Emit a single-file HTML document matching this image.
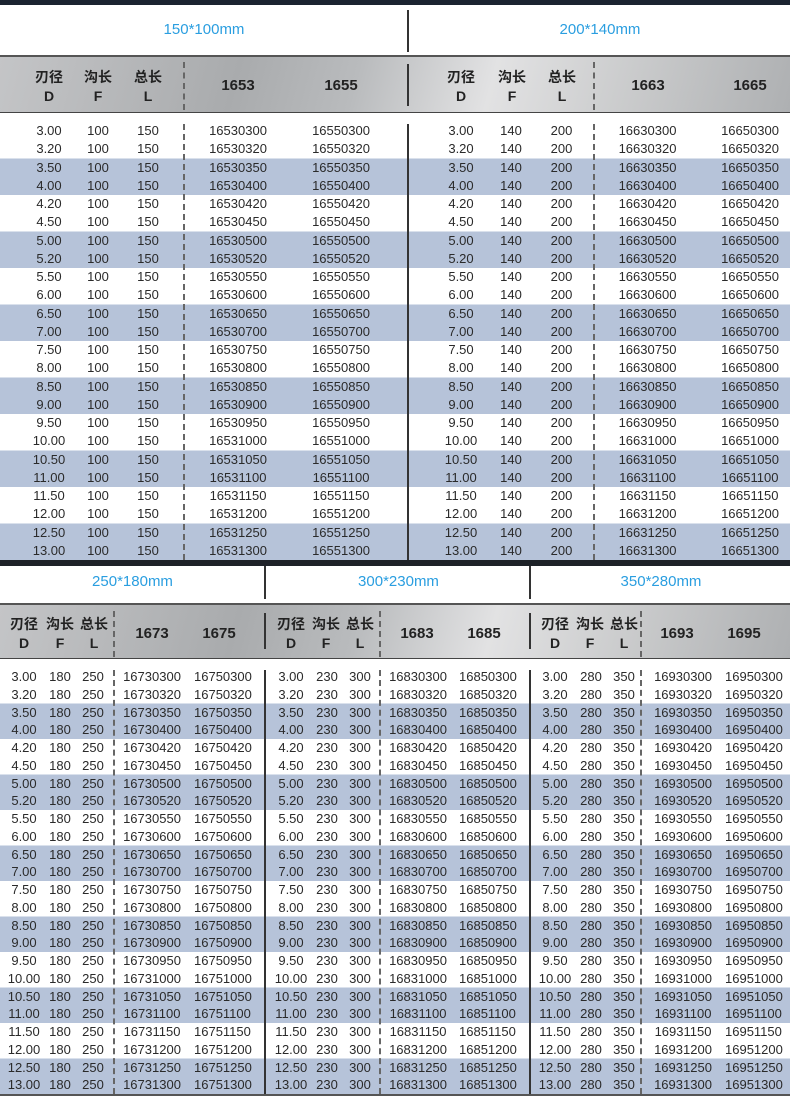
<!DOCTYPE html>
<html><head><meta charset="utf-8"><style>
*{margin:0;padding:0;box-sizing:border-box}
body{width:790px;height:1100px;position:relative;background:#fff;font-family:"Liberation Sans","Noto Sans CJK SC",sans-serif;color:#2a2a2a;overflow:hidden}
.a{position:absolute}
.title{color:#2a9ee0;font-size:15px;text-align:center}
.hdr{background:linear-gradient(105deg,#c4c5c7 0%,#a9abad 30%,#b9bbbd 45%,#e2e2e3 62%,#c9cacb 80%,#aeb0b2 100%)}
.band{background:repeating-linear-gradient(#fff 0,#fff 36.5px,#b6c3d9 36.5px,#b6c3d9 73px)}
.band2{background:repeating-linear-gradient(#fff 0,#fff 35.5px,#b6c3d9 35.5px,#b6c3d9 71px)}
table{position:absolute;border-collapse:collapse;table-layout:fixed;font-size:13px;color:#2a2a2a}
td{padding:0;text-align:center;white-space:nowrap;overflow:visible}
.t td{height:18.25px;line-height:18.25px}
.b td{height:17.75px;line-height:17.75px}
.vl{position:absolute;width:2px;background:#333}
.dash{position:absolute;width:0;border-left:2px dashed #666}
.hc{position:absolute;font-weight:bold;font-size:14px;color:#222;text-align:center;line-height:19px}
.code{position:absolute;font-weight:bold;font-size:15px;color:#222;text-align:center}
</style></head><body>
<div class="a" style="left:0;top:0;width:790px;height:5px;background:#1b2330"></div>
<div class="a title" style="left:0;top:21px;width:408px">150*100mm</div>
<div class="a title" style="left:410px;top:21px;width:380px">200*140mm</div>
<div class="vl" style="left:407px;top:10px;height:42px"></div>
<div class="a" style="left:0;top:55px;width:790px;height:2px;background:#555"></div>
<div class="a hdr" style="left:0;top:57px;width:790px;height:55px"></div>
<div class="a" style="left:0;top:112px;width:790px;height:1px;background:#444"></div>
<div class="vl" style="left:407px;top:64px;height:42px"></div>
<div class="dash" style="left:183px;top:62px;height:48px"></div>
<div class="dash" style="left:593px;top:62px;height:48px"></div>
<div class="hc" style="left:24px;top:68px;width:50px">刃径<br>D</div>
<div class="hc" style="left:74px;top:68px;width:48px">沟长<br>F</div>
<div class="hc" style="left:122px;top:68px;width:52px">总长<br>L</div>
<div class="code" style="left:198px;top:77px;width:80px">1653</div>
<div class="code" style="left:301px;top:77px;width:80px">1655</div>
<div class="hc" style="left:436px;top:68px;width:50px">刃径<br>D</div>
<div class="hc" style="left:487px;top:68px;width:50px">沟长<br>F</div>
<div class="hc" style="left:537px;top:68px;width:50px">总长<br>L</div>
<div class="code" style="left:608px;top:77px;width:80px">1663</div>
<div class="code" style="left:710px;top:77px;width:80px">1665</div>
<div class="a band" style="left:0;top:122px;width:790px;height:438px"></div>
<div class="vl" style="left:407px;top:124px;height:436px"></div>
<div class="dash" style="left:183px;top:124px;height:436px"></div>
<div class="dash" style="left:593px;top:124px;height:436px"></div>
<table class="t" style="left:24px;top:122px;width:356px"><colgroup><col style="width:50px"><col style="width:48px"><col style="width:52px"><col style="width:128px"><col style="width:78px"></colgroup>
<tr><td>3.00<td>100<td>150<td>16530300<td>16550300
<tr><td>3.20<td>100<td>150<td>16530320<td>16550320
<tr><td>3.50<td>100<td>150<td>16530350<td>16550350
<tr><td>4.00<td>100<td>150<td>16530400<td>16550400
<tr><td>4.20<td>100<td>150<td>16530420<td>16550420
<tr><td>4.50<td>100<td>150<td>16530450<td>16550450
<tr><td>5.00<td>100<td>150<td>16530500<td>16550500
<tr><td>5.20<td>100<td>150<td>16530520<td>16550520
<tr><td>5.50<td>100<td>150<td>16530550<td>16550550
<tr><td>6.00<td>100<td>150<td>16530600<td>16550600
<tr><td>6.50<td>100<td>150<td>16530650<td>16550650
<tr><td>7.00<td>100<td>150<td>16530700<td>16550700
<tr><td>7.50<td>100<td>150<td>16530750<td>16550750
<tr><td>8.00<td>100<td>150<td>16530800<td>16550800
<tr><td>8.50<td>100<td>150<td>16530850<td>16550850
<tr><td>9.00<td>100<td>150<td>16530900<td>16550900
<tr><td>9.50<td>100<td>150<td>16530950<td>16550950
<tr><td>10.00<td>100<td>150<td>16531000<td>16551000
<tr><td>10.50<td>100<td>150<td>16531050<td>16551050
<tr><td>11.00<td>100<td>150<td>16531100<td>16551100
<tr><td>11.50<td>100<td>150<td>16531150<td>16551150
<tr><td>12.00<td>100<td>150<td>16531200<td>16551200
<tr><td>12.50<td>100<td>150<td>16531250<td>16551250
<tr><td>13.00<td>100<td>150<td>16531300<td>16551300
</table>
<table class="t" style="left:436px;top:122px;width:356px"><colgroup><col style="width:50px"><col style="width:50px"><col style="width:51px"><col style="width:121px"><col style="width:84px"></colgroup>
<tr><td>3.00<td>140<td>200<td>16630300<td>16650300
<tr><td>3.20<td>140<td>200<td>16630320<td>16650320
<tr><td>3.50<td>140<td>200<td>16630350<td>16650350
<tr><td>4.00<td>140<td>200<td>16630400<td>16650400
<tr><td>4.20<td>140<td>200<td>16630420<td>16650420
<tr><td>4.50<td>140<td>200<td>16630450<td>16650450
<tr><td>5.00<td>140<td>200<td>16630500<td>16650500
<tr><td>5.20<td>140<td>200<td>16630520<td>16650520
<tr><td>5.50<td>140<td>200<td>16630550<td>16650550
<tr><td>6.00<td>140<td>200<td>16630600<td>16650600
<tr><td>6.50<td>140<td>200<td>16630650<td>16650650
<tr><td>7.00<td>140<td>200<td>16630700<td>16650700
<tr><td>7.50<td>140<td>200<td>16630750<td>16650750
<tr><td>8.00<td>140<td>200<td>16630800<td>16650800
<tr><td>8.50<td>140<td>200<td>16630850<td>16650850
<tr><td>9.00<td>140<td>200<td>16630900<td>16650900
<tr><td>9.50<td>140<td>200<td>16630950<td>16650950
<tr><td>10.00<td>140<td>200<td>16631000<td>16651000
<tr><td>10.50<td>140<td>200<td>16631050<td>16651050
<tr><td>11.00<td>140<td>200<td>16631100<td>16651100
<tr><td>11.50<td>140<td>200<td>16631150<td>16651150
<tr><td>12.00<td>140<td>200<td>16631200<td>16651200
<tr><td>12.50<td>140<td>200<td>16631250<td>16651250
<tr><td>13.00<td>140<td>200<td>16631300<td>16651300
</table>

<div class="a" style="left:0;top:560px;width:790px;height:6px;background:#1e2228"></div>
<div class="a title" style="left:0;top:573px;width:265px">250*180mm</div>
<div class="a title" style="left:267px;top:573px;width:263px">300*230mm</div>
<div class="a title" style="left:532px;top:573px;width:258px">350*280mm</div>
<div class="vl" style="left:264px;top:566px;height:33px"></div>
<div class="vl" style="left:529px;top:566px;height:33px"></div>
<div class="a" style="left:0;top:603px;width:790px;height:2px;background:#555"></div>
<div class="a hdr" style="left:0;top:605px;width:790px;height:53px"></div>
<div class="a" style="left:0;top:658px;width:790px;height:1px;background:#444"></div>
<div class="vl" style="left:264px;top:613px;height:36px"></div>
<div class="vl" style="left:529px;top:613px;height:36px"></div>
<div class="dash" style="left:113px;top:611px;height:46px"></div>
<div class="dash" style="left:379px;top:611px;height:46px"></div>
<div class="dash" style="left:640px;top:611px;height:46px"></div>

<div class="hc" style="left:4px;top:615px;width:40px">刃径<br>D</div>
<div class="hc" style="left:42px;top:615px;width:36px">沟长<br>F</div>
<div class="hc" style="left:76px;top:615px;width:36px">总长<br>L</div>
<div class="code" style="left:122px;top:625px;width:60px">1673</div>
<div class="code" style="left:189px;top:625px;width:60px">1675</div>
<div class="hc" style="left:271px;top:615px;width:40px">刃径<br>D</div>
<div class="hc" style="left:308px;top:615px;width:36px">沟长<br>F</div>
<div class="hc" style="left:342px;top:615px;width:36px">总长<br>L</div>
<div class="code" style="left:387px;top:625px;width:60px">1683</div>
<div class="code" style="left:454px;top:625px;width:60px">1685</div>
<div class="hc" style="left:535px;top:615px;width:40px">刃径<br>D</div>
<div class="hc" style="left:572px;top:615px;width:36px">沟长<br>F</div>
<div class="hc" style="left:606px;top:615px;width:36px">总长<br>L</div>
<div class="code" style="left:647px;top:625px;width:60px">1693</div>
<div class="code" style="left:714px;top:625px;width:60px">1695</div>

<div class="a band2" style="left:0;top:668px;width:790px;height:426px"></div>
<div class="a" style="left:0;top:1094px;width:790px;height:2px;background:#555"></div>
<div class="vl" style="left:264px;top:670px;height:424px"></div>
<div class="vl" style="left:529px;top:670px;height:424px"></div>
<div class="dash" style="left:113px;top:670px;height:424px"></div>
<div class="dash" style="left:379px;top:670px;height:424px"></div>
<div class="dash" style="left:640px;top:670px;height:424px"></div>

<table class="b" style="left:4px;top:668px;width:240px"><colgroup><col style="width:40px"><col style="width:32px"><col style="width:34px"><col style="width:84px"><col style="width:50px"></colgroup>
<tr><td>3.00<td>180<td>250<td>16730300<td>16750300
<tr><td>3.20<td>180<td>250<td>16730320<td>16750320
<tr><td>3.50<td>180<td>250<td>16730350<td>16750350
<tr><td>4.00<td>180<td>250<td>16730400<td>16750400
<tr><td>4.20<td>180<td>250<td>16730420<td>16750420
<tr><td>4.50<td>180<td>250<td>16730450<td>16750450
<tr><td>5.00<td>180<td>250<td>16730500<td>16750500
<tr><td>5.20<td>180<td>250<td>16730520<td>16750520
<tr><td>5.50<td>180<td>250<td>16730550<td>16750550
<tr><td>6.00<td>180<td>250<td>16730600<td>16750600
<tr><td>6.50<td>180<td>250<td>16730650<td>16750650
<tr><td>7.00<td>180<td>250<td>16730700<td>16750700
<tr><td>7.50<td>180<td>250<td>16730750<td>16750750
<tr><td>8.00<td>180<td>250<td>16730800<td>16750800
<tr><td>8.50<td>180<td>250<td>16730850<td>16750850
<tr><td>9.00<td>180<td>250<td>16730900<td>16750900
<tr><td>9.50<td>180<td>250<td>16730950<td>16750950
<tr><td>10.00<td>180<td>250<td>16731000<td>16751000
<tr><td>10.50<td>180<td>250<td>16731050<td>16751050
<tr><td>11.00<td>180<td>250<td>16731100<td>16751100
<tr><td>11.50<td>180<td>250<td>16731150<td>16751150
<tr><td>12.00<td>180<td>250<td>16731200<td>16751200
<tr><td>12.50<td>180<td>250<td>16731250<td>16751250
<tr><td>13.00<td>180<td>250<td>16731300<td>16751300
</table>
<table class="b" style="left:271px;top:668px;width:240px"><colgroup><col style="width:40px"><col style="width:32px"><col style="width:34px"><col style="width:82px"><col style="width:52px"></colgroup>
<tr><td>3.00<td>230<td>300<td>16830300<td>16850300
<tr><td>3.20<td>230<td>300<td>16830320<td>16850320
<tr><td>3.50<td>230<td>300<td>16830350<td>16850350
<tr><td>4.00<td>230<td>300<td>16830400<td>16850400
<tr><td>4.20<td>230<td>300<td>16830420<td>16850420
<tr><td>4.50<td>230<td>300<td>16830450<td>16850450
<tr><td>5.00<td>230<td>300<td>16830500<td>16850500
<tr><td>5.20<td>230<td>300<td>16830520<td>16850520
<tr><td>5.50<td>230<td>300<td>16830550<td>16850550
<tr><td>6.00<td>230<td>300<td>16830600<td>16850600
<tr><td>6.50<td>230<td>300<td>16830650<td>16850650
<tr><td>7.00<td>230<td>300<td>16830700<td>16850700
<tr><td>7.50<td>230<td>300<td>16830750<td>16850750
<tr><td>8.00<td>230<td>300<td>16830800<td>16850800
<tr><td>8.50<td>230<td>300<td>16830850<td>16850850
<tr><td>9.00<td>230<td>300<td>16830900<td>16850900
<tr><td>9.50<td>230<td>300<td>16830950<td>16850950
<tr><td>10.00<td>230<td>300<td>16831000<td>16851000
<tr><td>10.50<td>230<td>300<td>16831050<td>16851050
<tr><td>11.00<td>230<td>300<td>16831100<td>16851100
<tr><td>11.50<td>230<td>300<td>16831150<td>16851150
<tr><td>12.00<td>230<td>300<td>16831200<td>16851200
<tr><td>12.50<td>230<td>300<td>16831250<td>16851250
<tr><td>13.00<td>230<td>300<td>16831300<td>16851300
</table>
<table class="b" style="left:535px;top:668px;width:240px"><colgroup><col style="width:40px"><col style="width:32px"><col style="width:34px"><col style="width:84px"><col style="width:50px"></colgroup>
<tr><td>3.00<td>280<td>350<td>16930300<td>16950300
<tr><td>3.20<td>280<td>350<td>16930320<td>16950320
<tr><td>3.50<td>280<td>350<td>16930350<td>16950350
<tr><td>4.00<td>280<td>350<td>16930400<td>16950400
<tr><td>4.20<td>280<td>350<td>16930420<td>16950420
<tr><td>4.50<td>280<td>350<td>16930450<td>16950450
<tr><td>5.00<td>280<td>350<td>16930500<td>16950500
<tr><td>5.20<td>280<td>350<td>16930520<td>16950520
<tr><td>5.50<td>280<td>350<td>16930550<td>16950550
<tr><td>6.00<td>280<td>350<td>16930600<td>16950600
<tr><td>6.50<td>280<td>350<td>16930650<td>16950650
<tr><td>7.00<td>280<td>350<td>16930700<td>16950700
<tr><td>7.50<td>280<td>350<td>16930750<td>16950750
<tr><td>8.00<td>280<td>350<td>16930800<td>16950800
<tr><td>8.50<td>280<td>350<td>16930850<td>16950850
<tr><td>9.00<td>280<td>350<td>16930900<td>16950900
<tr><td>9.50<td>280<td>350<td>16930950<td>16950950
<tr><td>10.00<td>280<td>350<td>16931000<td>16951000
<tr><td>10.50<td>280<td>350<td>16931050<td>16951050
<tr><td>11.00<td>280<td>350<td>16931100<td>16951100
<tr><td>11.50<td>280<td>350<td>16931150<td>16951150
<tr><td>12.00<td>280<td>350<td>16931200<td>16951200
<tr><td>12.50<td>280<td>350<td>16931250<td>16951250
<tr><td>13.00<td>280<td>350<td>16931300<td>16951300
</table>
</body></html>
